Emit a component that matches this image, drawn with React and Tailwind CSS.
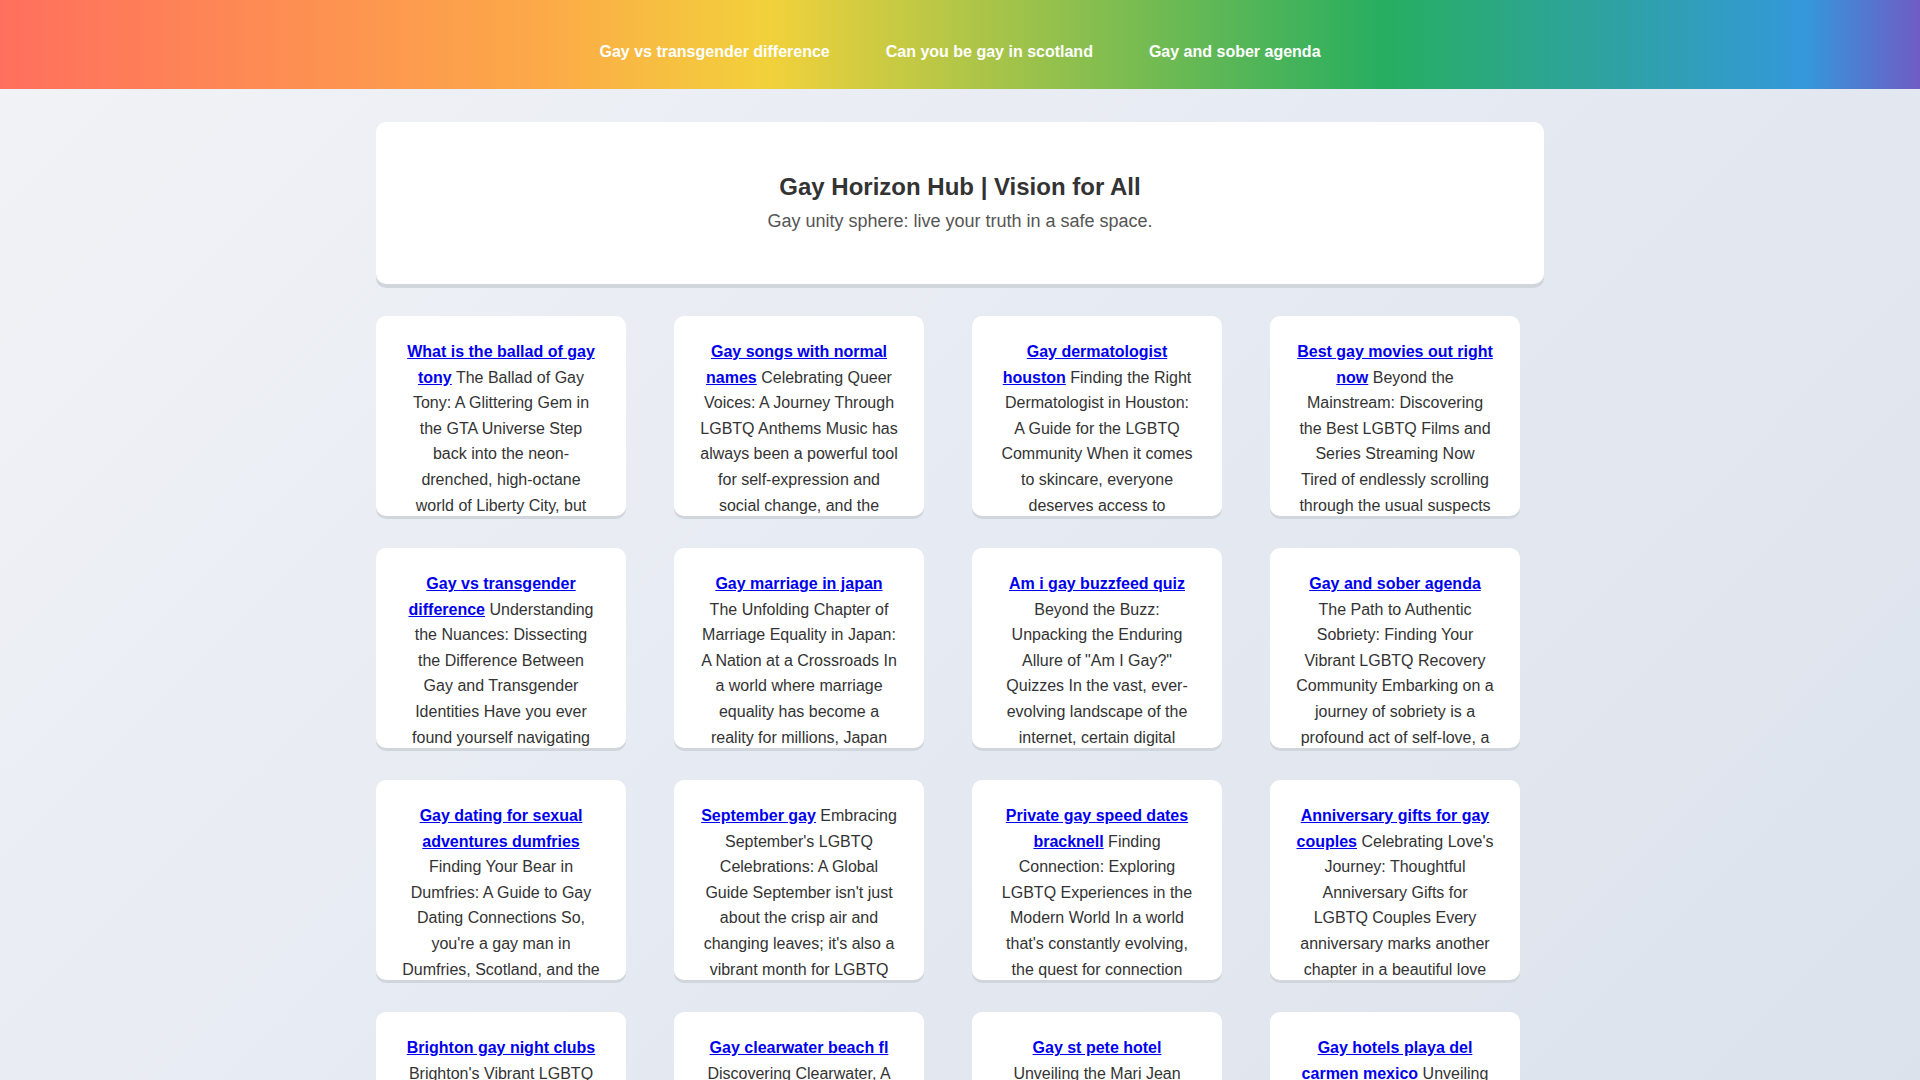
const cards = [
  ["What is the ballad of gay tony", "The Ballad of Gay Tony: A Glittering Gem in the GTA Universe Step back into the neon-drenched, high-octane world of Liberty City, but this time, prepare yourself for a story unlike any other."],
  ["Gay songs with normal names", "Celebrating Queer Voices: A Journey Through LGBTQ Anthems Music has always been a powerful tool for self-expression and social change, and the LGBTQ community has long found solace in it."],
  ["Gay dermatologist houston", "Finding the Right Dermatologist in Houston: A Guide for the LGBTQ Community When it comes to skincare, everyone deserves access to compassionate care."],
  ["Best gay movies out right now", "Beyond the Mainstream: Discovering the Best LGBTQ Films and Series Streaming Now Tired of endlessly scrolling through the usual suspects on every platform?"],
  ["Gay vs transgender difference", "Understanding the Nuances: Dissecting the Difference Between Gay and Transgender Identities Have you ever found yourself navigating conversations about identity?"],
  ["Gay marriage in japan", "The Unfolding Chapter of Marriage Equality in Japan: A Nation at a Crossroads In a world where marriage equality has become a reality for millions, Japan remains an outlier."],
  ["Am i gay buzzfeed quiz", "Beyond the Buzz: Unpacking the Enduring Allure of \"Am I Gay?\" Quizzes In the vast, ever-evolving landscape of the internet, certain digital phenomena persist."],
  ["Gay and sober agenda", "The Path to Authentic Sobriety: Finding Your Vibrant LGBTQ Recovery Community Embarking on a journey of sobriety is a profound act of self-love, a commitment."],
  ["Gay dating for sexual adventures dumfries", "Finding Your Bear in Dumfries: A Guide to Gay Dating Connections So, you're a gay man in Dumfries, Scotland, and the search is on."],
  ["September gay", "Embracing September's LGBTQ Celebrations: A Global Guide September isn't just about the crisp air and changing leaves; it's also a vibrant month for LGBTQ communities."],
  ["Private gay speed dates bracknell", "Finding Connection: Exploring LGBTQ Experiences in the Modern World In a world that's constantly evolving, the quest for connection and belonging remains."],
  ["Anniversary gifts for gay couples", "Celebrating Love's Journey: Thoughtful Anniversary Gifts for LGBTQ Couples Every anniversary marks another chapter in a beautiful love story, a moment to celebrate."],
  ["Brighton gay night clubs", "Brighton's Vibrant LGBTQ Nightlife: A Guide to the Best Clubs and Bars Brighton has long been known as the gay capital of the UK."],
  ["Gay clearwater beach fl", "Discovering Clearwater, A Welcoming Haven for LGBTQ Travelers on Florida's Gulf Coast with sun, sand and a friendly scene."],
  ["Gay st pete hotel", "Unveiling the Mari Jean Hotel: A Gay Friendly Gem in St. Pete Looking for a stylish place to stay on your next trip?"],
  ["Gay hotels playa del carmen mexico", "Unveiling Playa del Carmen's LGBTQ-Friendly Hotels: Your Guide to a Welcoming Getaway on the Riviera Maya."],
];

export default function App() {
  return (
    <div className="h-screen overflow-y-scroll bg-[linear-gradient(135deg,#f1f3f6,#e6eaf2_50%,#dce2ec)]" style={{ fontFamily: '"Liberation Sans", Arial, sans-serif' }}>
      <header className="h-[89px] flex items-center justify-center gap-[56px] pt-[14px] bg-[linear-gradient(90deg,#ff6f5e_0%,#fca948_28%,#f2d13b_40%,#27ae60_72%,#3498db_94%,#6f5cc4_100%)]">
        {["Gay vs transgender difference", "Can you be gay in scotland", "Gay and sober agenda"].map((t) => (
          <a key={t} className="text-white font-bold text-[16px]">{t}</a>
        ))}
      </header>
      <main className="w-[1168px] mx-auto pt-[33px] pb-10">
        <section className="bg-white rounded-[10px] h-[162px] flex flex-col items-center justify-center gap-[6px] shadow-[0_4px_0_#d1d5dc]">
          <h1 className="text-[24px] leading-[30px] font-bold text-[#333]">Gay Horizon Hub | Vision for All</h1>
          <p className="text-[18px] leading-[27px] text-[#555]">Gay unity sphere: live your truth in a safe space.</p>
        </section>
        <div className="grid grid-cols-[repeat(4,250px)] gap-x-[48px] gap-y-[32px] mt-[32px]">
          {cards.map(([t, d]) => (
            <div key={t} className="bg-white rounded-[10px] h-[200px] overflow-hidden px-[26px] pt-[23px] text-center text-[16px] leading-[25.6px] text-[#333] shadow-[0_3px_0_#d1d5dc]">
              <a className="font-bold underline text-[#0000ee]">{t}</a> {d}
            </div>
          ))}
        </div>
      </main>
    </div>
  );
}
